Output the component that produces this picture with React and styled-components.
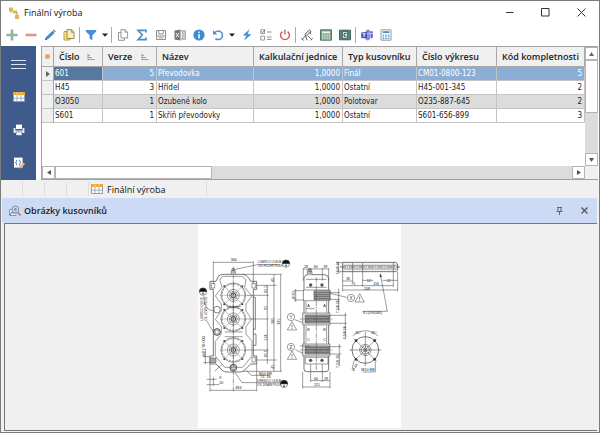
import React, { useState } from 'react'
import styled, { createGlobalStyle } from 'styled-components'

const columns = [
  { key: 'cislo', title: 'Číslo', width: 49, sort: true },
  { key: 'verze', title: 'Verze', width: 54, right: true, sort: true },
  { key: 'nazev', title: 'Název' },
  { key: 'jednice', title: 'Kalkulační jednice', width: 89, right: true },
  { key: 'typ', title: 'Typ kusovníku', width: 74 },
  { key: 'vykres', title: 'Číslo výkresu', width: 80 },
  { key: 'kod', title: 'Kód kompletnosti', width: 88, right: true },
]

const rows = [
  {
    cislo: '601',
    verze: '5',
    nazev: 'Převodovka',
    jednice: '1,0000',
    typ: 'Finál',
    vykres: 'CM01-0800-123',
    kod: '5',
  },
  {
    cislo: 'H45',
    verze: '3',
    nazev: 'Hřídel',
    jednice: '1,0000',
    typ: 'Ostatní',
    vykres: 'H45-001-345',
    kod: '2',
  },
  {
    cislo: 'O3050',
    verze: '1',
    nazev: 'Ozubené kolo',
    jednice: '1,0000',
    typ: 'Polotovar',
    vykres: 'O235-887-645',
    kod: '2',
  },
  {
    cislo: 'S601',
    verze: '1',
    nazev: 'Skříň převodovky',
    jednice: '1,0000',
    typ: 'Ostatní',
    vykres: 'S601-656-899',
    kod: '3',
  },
]

// toolbar icons, all on a 12 x 12 grid
const icons = {
  plus: <path d="M6 0.5V11.5M0.5 6H11.5" stroke="#8fb5a0" strokeWidth="2.6" />,
  minus: <path d="M0.5 6H11.5" stroke="#e0958a" strokeWidth="2.6" />,
  pencil: (
    <>
      <path d="M1 11L2 8L8.5 1.8L10.6 3.9L4 10.2Z" fill="#4a8ccb" />
      <path d="M9 1.3L9.8 0.6L11.7 2.5L11 3.3Z" fill="#35659c" />
      <path d="M1 11L1.6 9.2L2.9 10.4Z" fill="#444" />
    </>
  ),
  paste: (
    <>
      <path d="M1 2.5H7V11H1Z" fill="#ffe08a" stroke="#c99a33" />
      <path d="M4 0.6H8.5L11 3V9.5H4Z" fill="#ffeeb5" stroke="#8d7a4d" strokeWidth="0.9" />
      <path d="M8.3 0.6V3.2H11" fill="none" stroke="#8d7a4d" strokeWidth="0.8" />
    </>
  ),
  filter: <path d="M0.8 1H11.2V2.4L7.4 6.2V11.2L4.6 9.4V6.2L0.8 2.4Z" fill="#4490d8" />,
  copy: (
    <>
      <path d="M1.5 3.5H7.5V11.3H1.5Z" fill="#fff" stroke="#8a8a8a" strokeWidth="0.9" />
      <path d="M4 0.7H8L10.6 3.2V9H4Z" fill="#fff" stroke="#8a8a8a" strokeWidth="0.9" />
      <path d="M8 0.7V3.2H10.6" fill="none" stroke="#8a8a8a" strokeWidth="0.8" />
    </>
  ),
  sigma: (
    <path
      d="M10 3.4V1.4H2L6.3 6L2 10.6H10V8.6"
      fill="none"
      stroke="#4a8bc9"
      strokeWidth="1.6"
    />
  ),
  save: (
    <>
      <path d="M1.5 1.5H10.5V10.5H1.5Z" fill="#fff" stroke="#909090" />
      <path d="M3.8 1.5V5H8.2V1.5M1.5 7H10.5M3.5 8.8H8.5" fill="none" stroke="#909090" />
    </>
  ),
  excel: (
    <>
      <path d="M0.5 1.6L6.5 0.5V11.5L0.5 10.4Z" fill="#777" />
      <path d="M2 4L5 8.2M5 4L2 8.2" stroke="#fff" strokeWidth="0.9" />
      <path d="M7 1.8H11.4V10.2H7" fill="#eee" stroke="#999" strokeWidth="0.9" />
      <path d="M8.6 2V10M10 2V10" stroke="#999" strokeWidth="0.7" />
    </>
  ),
  info: (
    <>
      <circle cx="6" cy="6" r="5.6" fill="#3a8bd3" />
      <path d="M6 5V9.4M6 2.6V4" stroke="#fff" strokeWidth="1.5" />
    </>
  ),
  refresh: (
    <>
      <path
        d="M2.4 4.2A4.3 4.3 0 1 1 3.4 9.6"
        fill="none"
        stroke="#4a8ed0"
        strokeWidth="1.5"
      />
      <path d="M1 1.2V5.6H5.4Z" fill="#4a8ed0" />
    </>
  ),
  bolt: <path d="M8.6 0.3L1.8 6.2L5.2 6.8L3 11.8L10.2 5.4L6.8 4.8Z" fill="#4a94dc" />,
  list: (
    <>
      <path d="M0.8 0.8H4.6V4.6H0.8ZM0.8 7.2H4.6V11H0.8Z" fill="none" stroke="#8c8c8c" strokeWidth="0.9" />
      <path d="M1.4 2.4L2.6 3.7L5.2 0.6" fill="none" stroke="#666" strokeWidth="0.8" />
      <path d="M7 3H11.5M7 8H11.5M7 10.4H11.5" stroke="#8c8c8c" strokeWidth="1" />
    </>
  ),
  power: (
    <>
      <path
        d="M3.4 2.6A4.4 4.4 0 1 0 8.6 2.6"
        fill="none"
        stroke="#cf5a5d"
        strokeWidth="1.4"
      />
      <path d="M6 0.4V5.6" stroke="#cf5a5d" strokeWidth="1.4" />
    </>
  ),
  arm: (
    <>
      <path d="M3.6 5.4L8.4 0.8L10 2.4L5.4 7Z" fill="#ddd" stroke="#555" strokeWidth="0.8" />
      <path d="M9.6 2.6L9.2 5.4M4.6 6.4L1 11M4.6 6.4L6 11.4M7 7L11 10.8" fill="none" stroke="#555" strokeWidth="0.9" />
      <path d="M0.4 9.4L2.6 11.4M9.6 11.4L11.6 9.4" stroke="#555" strokeWidth="1" />
    </>
  ),
  calc: (
    <>
      <path d="M0.5 0.8H11.5V11.2H0.5Z" fill="#7fa38a" stroke="#4f7a5e" />
      <path d="M2 2.4H10V4.4H2Z" fill="#e9f2ea" />
      <path d="M2 6.2H10M2 8H10M2 9.8H10" stroke="#edf4ee" strokeWidth="1" strokeDasharray="1.4 0.8" />
    </>
  ),
  safe: (
    <>
      <path d="M0.5 1.2H11.5V10.8H0.5Z" fill="#5d8580" stroke="#3f6660" />
      <path d="M3.4 2.4H8.6V9.6H3.4Z" fill="#d6e4df" stroke="#2e4f4b" strokeWidth="0.8" />
      <path d="M7.4 4.4Q5 3.6 5 6T7.4 7.8" fill="none" stroke="#2e4f4b" strokeWidth="1" />
    </>
  ),
  teams: (
    <>
      <circle cx="7" cy="2.4" r="1.9" fill="#7b83d6" />
      <circle cx="10.4" cy="3.2" r="1.3" fill="#5a62c3" />
      <path d="M4 4.6H9.4V8.6Q9.2 11.2 6.6 11.4Q4.4 11.2 4 9Z" fill="#8790e0" />
      <path d="M9.6 5H11.9V8Q11.6 9.6 9.8 9.6Z" fill="#6068c6" />
      <path d="M0.2 3.4L6 2.8V9.6L0.2 9Z" fill="#5059b8" />
      <path d="M1.6 4.8H4.6M3.1 4.8V8" stroke="#fff" strokeWidth="0.9" />
    </>
  ),
  sheet: (
    <>
      <path d="M1 0.8H11V11.2H1Z" fill="#fdfdfd" stroke="#999" />
      <path d="M2.6 2.2H9.4V4H2.6Z" fill="#4c8bc8" />
      <path d="M2.6 6H9.4M2.6 7.8H9.4M2.6 9.6H9.4" stroke="#4c8bc8" strokeWidth="1" strokeDasharray="1.6 1" />
    </>
  ),
  caret: <path d="M3 4.4H9L6 7.8Z" fill="#222" />,
  menu: <path d="M0 2.5H15M0 6.5H15M0 10.5H15" stroke="#dde5f2" strokeWidth="1" />,
  table: (
    <>
      <path d="M0.5 1.5H11.5V10.5H0.5Z" fill="#fff" stroke="#8d9db5" />
      <path d="M0 1H12V4H0Z" fill="#f0a63c" />
      <path d="M4 4V10.5M8 4V10.5M0.5 7.2H11.5" stroke="#8d9db5" strokeWidth="0.8" />
      <path d="M4 1V4M8 1V4" stroke="#fbe2b8" strokeWidth="0.6" />
    </>
  ),
  printer: (
    <>
      <path d="M3 0.6H9V5H3Z" fill="#fff" />
      <path d="M0.6 4H2.4V6.4H9.6V4H11.4V9H0.6Z" fill="#e7ecf4" />
      <path d="M3 8H9V11.4H3Z" fill="#fff" stroke="#3f5b8b" strokeWidth="0.6" />
    </>
  ),
  script: (
    <>
      <path d="M1 0.6H9.6V10.6H1Z" fill="#fff" />
      <path d="M4.2 3Q3.2 3 3.4 4.6Q3.4 5.6 2.4 5.6Q3.4 5.6 3.4 6.6Q3.2 8.4 4.2 8.4M6 3Q7.2 3 7 4.6Q7 5.6 8 5.6Q7 5.6 7 6.6Q7.2 8.4 6 8.4" fill="none" stroke="#3d6fb5" strokeWidth="0.9" />
      <path d="M6 11.4L6.6 9.4L10.6 5.6L12 7L8 11Z" fill="#f0b352" />
    </>
  ),
}

const Icon = ({ name, box = 12 }) => (
  <svg width={box} height="12" viewBox={`0 0 ${box} 12`} aria-hidden="true">
    {icons[name]}
  </svg>
)

const toolbar = [
  [
    ['plus', 'Nový'],
    ['minus', 'Smazat'],
    ['pencil', 'Opravit'],
    ['paste', 'Kopie'],
  ],
  [
    ['filter', 'Filtr'],
    ['caret', 'Další filtry'],
  ],
  [
    ['copy', 'Kopírovat'],
    ['sigma', 'Součet'],
    ['save', 'Uložit'],
    ['excel', 'Export'],
    ['info', 'Informace'],
    ['refresh', 'Obnovit'],
    ['caret', 'Možnosti obnovení'],
    ['bolt', 'Akce'],
    ['list', 'Označit'],
    ['power', 'Ukončit'],
  ],
  [
    ['arm', 'Výroba'],
    ['calc', 'Kalkulace'],
    ['safe', 'Ceny'],
  ],
  [
    ['teams', 'Teams'],
    ['sheet', 'Kalkulačka'],
  ],
]

const sideItems = [
  ['menu', 'Nabídka'],
  ['table', 'Tabulka'],
  ['printer', 'Tisk'],
  ['script', 'Skripty'],
]

// one bearing seat of the gearbox: rings, cross lines and bolts
const Seat = ({ x, y }) => (
  <g transform={`translate(${x} ${y})`}>
    <circle r="37" />
    <circle r="34" strokeDasharray="7 3" />
    <circle r="18" />
    <circle r="12" />
    <circle r="7" strokeWidth="3" />
    <path d="M-40 0H40M0 -42V42M-29 -29L29 29M-29 29L29 -29" strokeWidth="1" />
    <g fill="#444" stroke="none">
      <circle cx="-27" cy="-27" r="3" />
      <circle cx="27" cy="-27" r="3" />
      <circle cx="-27" cy="27" r="3" />
      <circle cx="27" cy="27" r="3" />
    </g>
  </g>
)

const LevelMark = ({ x, y }) => (
  <g transform={`translate(${x} ${y})`}>
    <circle r="11" fill="#fff" />
    <path d="M-11 0A11 11 0 0 1 11 0Z" fill="#111" />
    <path d="M-3 8H3L0 2Z" fill="#111" stroke="none" />
  </g>
)

const Flag = ({ x, y, tx, ty, letter }) => (
  <>
    <circle cx={x} cy={y} r="11" />
    <text x={x} y={y + 5} fontSize="14" textAnchor="middle" fill="#333" stroke="none">
      {letter}
    </text>
    <path d={`M${tx} ${ty - 14}L${tx + 14} ${ty + 11}H${tx - 14}Z`} />
    <path d={`M${tx} ${ty - 5}V${ty + 3}M${tx} ${ty + 5}V${ty + 8}`} strokeWidth="2" />
  </>
)

const Shaft = ({ y }) => (
  <g transform={`translate(0 ${y})`}>
    <path d="M308 -18H390V18H308Z" fill="#e4e4e4" />
    <path d="M316 -12H388V12H316Z" fill="#aaa" />
    <path d="M316 -7H388M316 -2H388M316 3H388M316 8H388" stroke="#333" strokeWidth="1.6" />
    <path d="M300 0H398" strokeDasharray="10 3 3 3" />
  </g>
)

const Drawing = () => (
  <Sheet viewBox="0 0 203 204" role="img" aria-label="Výkres převodovky">
    <g
      transform="translate(2 30) scale(0.3333)"
      fill="none"
      stroke="#444"
      strokeWidth="1.6"
    >
      {/* front view */}
      <path d="M56 65Q60 62 74 61H128Q140 62 146 72L152 82H170V106H160V306H170V330H152L132 350Q128 354 120 354H82Q72 354 68 350L48 330H30V306H40V106H30V82H48Z" strokeWidth="2.2" />
      <path d="M62 72Q66 67 76 67H124Q132 68 138 78L134 100L156 126L138 150V170L154 196L138 218V240L156 262V306L128 340H74L46 306V262L64 240V218L46 196L64 170V150L46 126L66 100L60 78Z" />
      <path d="M94 61V50H106V61M96 50V44H104V50" fill="#ccc" />
      <path d="M160 130H166V226H160M160 240H168V274H160" strokeWidth="2" />
      <path d="M74 234H128M74 248H128M80 158H122" />
      <Seat x={100} y={124} />
      <Seat x={100} y={195} />
      <Seat x={100} y={288} />
      <path d="M100 38V415" strokeDasharray="14 3 4 3" />
      <circle cx="51" cy="167" r="10" strokeWidth="2" />
      <circle cx="51" cy="234" r="10" strokeWidth="3" />
      <circle cx="51" cy="234" r="6" />
      <circle cx="100" cy="341" r="10" strokeWidth="3" />
      <circle cx="100" cy="341" r="6" />
      <path d="M30 312H48V326H30Z" fill="#aaa" />
      <path d="M34 88H44V102H34ZM156 88H166V102H156ZM156 310H166V324H156Z" />

      {/* front view dimensions */}
      <path d="M40 25H160M40 22V90M160 22V90M30 409H170M30 330V412M170 330V412" />
      <path d="M128 61H246M170 94H230M140 124H206M140 195H206M140 288H206M170 318H230M128 352H246" />
      <path d="M202 94V330M222 61V352M242 61V352" />
      <path d="M20 376H50M20 392H58M40 370V396" />
      <path d="M106 46L172 32H240M12 125V135Q14 170 40 170M40 234L20 200M140 350L154 364H208M104 354L126 386H240M44 352L66 332" />
      <path d="M16 285V330M10 308H30M10 326H30" />
      <LevelMark x={258} y={29} />
      <LevelMark x={9} y={113} />
      <LevelMark x={252} y={390} />

      {/* side view */}
      <path d="M312 345V72Q314 62 324 62H374Q386 64 386 74V345Q386 353 378 353H320Q312 353 312 345Z" strokeWidth="2.2" />
      <path d="M318 76H380M318 100H380M318 142V176M380 142V176M318 216V268M380 216V268M316 310H384V330H316Z" />
      <path d="M322 62V52H336V62M324 52V45H334V52" fill="#ccc" />
      <path d="M310 108H390V140H310Z" fill="#fff" />
      <path d="M342 110H390V138H342Z" fill="#aaa" />
      <path d="M342 116H390M342 122H390M342 127H390M342 133H390" stroke="#333" strokeWidth="1.6" />
      <Shaft y={195} />
      <Shaft y={288} />
      <g fill="#555" stroke="none">
        <circle cx="332" cy="93" r="5" />
        <circle cx="366" cy="93" r="5" />
        <circle cx="332" cy="319" r="5" />
        <circle cx="366" cy="319" r="5" />
      </g>
      <path d="M349 70V350" strokeDasharray="14 3 4 3" />
      <path d="M310 45H386M310 42V80M330 42V60M367 42V80M386 42V80" />
      <path d="M282 110H310M282 138H310M287 105V144M390 116H420M390 136H420M416 104V170" />
      <path d="M390 184H440M390 208H440M436 176V256M390 278H424M390 300H424M418 270V336" />
      <path d="M308 353V404M390 353V404M308 399H390M332 330V384M367 330V384M332 380H390" />
      <path d="M284 197L308 206M286 287L308 298M300 276H330M318 164H344M390 118L440 130" />
      <Flag x={453} y={132} tx={479} ty={133} letter="X" />
      <Flag x={273} y={189} tx={276} ty={217} letter="Y" />
      <Flag x={273} y={279} tx={276} ty={305} letter="Z" />

      {/* input shaft */}
      <path d="M428 25H588L593 30V48L588 53H428Z" fill="#f2f2f2" strokeWidth="2.2" />
      <path d="M430 34H590M430 45H590M458 26V52M488 26V52M580 26V52" />
      <path d="M420 39H600" strokeWidth="2.4" strokeDasharray="18 3 4 3" />
      <path d="M428 53V112M593 53V112M458 53V84M488 53V98M580 53V98" />
      <path d="M428 81H458M488 79H520M548 79H593M428 95H580M428 108H593M415 26V56M410 26H428M410 53H428" />
      <path d="M541 60L562 172H488" />
      <path d="M541 60L545 68L540 69Z" fill="#333" />

      {/* flange detail */}
      <circle cx="496" cy="288" r="40" strokeWidth="2.2" />
      <circle cx="496" cy="288" r="17" />
      <circle cx="496" cy="288" r="12" strokeWidth="3" strokeDasharray="4 2" />
      <circle cx="496" cy="288" r="5" />
      <path d="M448 288H544M496 234V336M462 254L530 322M530 254L462 322" />
      <path d="M458 246A54 54 0 0 1 534 246M462 322L456 344M526 322V354H488" />
      <g fill="#333" stroke="none">
        <circle cx="468" cy="260" r="4" />
        <circle cx="524" cy="260" r="4" />
        <circle cx="468" cy="316" r="4" />
        <circle cx="524" cy="316" r="4" />
      </g>

      <g fill="#222" stroke="none" fontSize="11">
        <text x="92" y="22">360</text>
        <text x="174" y="28" fontSize="9">LUBRICO OLEJE</text>
        <text x="174" y="39" fontSize="9">OIL FILLER PLUG</text>
        <text x="172" y="384" fontSize="9">DRENICO OLEJE</text>
        <text x="172" y="395" fontSize="9">OIL DRAIN PLUG</text>
        <text x="176" y="362">M10 M8</text>
        <text x="180" y="373">TZ. 18</text>
        <text x="106" y="406">384</text>
        <text x="58" y="376">9</text>
        <text x="58" y="390">20</text>
        <text x="312" y="41">28</text>
        <text x="341" y="41">60</text>
        <text x="370" y="41">28</text>
        <text x="342" y="378">60</text>
        <text x="372" y="378">28</text>
        <text x="342" y="397">115</text>
        <text x="322" y="160">A</text>
        <text x="370" y="160">A</text>
        <text x="322" y="230">B</text>
        <text x="370" y="230">B</text>
        <text x="322" y="262">C</text>
        <text x="370" y="262">C</text>
        <text x="438" y="79">36</text>
        <text x="454" y="94">75</text>
        <text x="500" y="83">12</text>
        <text x="560" y="83">12</text>
        <text x="520" y="94">116</text>
        <text x="492" y="107">208</text>
        <text x="488" y="181" fontSize="9">N 1 (DIN5480)</text>
        <text x="466" y="240">45°</text>
        <text x="514" y="240">45°</text>
        <text x="484" y="350">M10 M8</text>
        <text transform="translate(200 116) rotate(-90)">82,5</text>
        <text transform="translate(200 168) rotate(-90)">91</text>
        <text transform="translate(200 260) rotate(-90)">124</text>
        <text transform="translate(200 310) rotate(-90)">82,5</text>
        <text transform="translate(221 84) rotate(-90)">45</text>
        <text transform="translate(221 210) rotate(-90)">305</text>
        <text transform="translate(221 344) rotate(-90)">45</text>
        <text transform="translate(241 212) rotate(-90)">395</text>
        <text transform="translate(10 200) rotate(-90)" fontSize="9">LUBRICO OLEJE</text>
        <text transform="translate(20 200) rotate(-90)" fontSize="9">OIL LEVEL PLUG</text>
        <text transform="translate(16 308) rotate(-90)" fontSize="9">4xØ 17/8H XX3</text>
        <text transform="translate(286 136) rotate(-90)">Ø 80</text>
        <text transform="translate(416 178) rotate(-90)">7,5/8 26</text>
        <text transform="translate(438 256) rotate(-90)">7,5/8 26</text>
        <text transform="translate(418 342) rotate(-90)">7,5/8 26</text>
        <text transform="translate(416 62) rotate(-90)">7,5/8 26</text>
        <text transform="translate(462 352) rotate(-60)">Ø 66</text>
      </g>
    </g>
  </Sheet>
)

function App() {
  const [selected, setSelected] = useState(0)

  return (
    <>
      <GlobalStyle />
      <Window>
        <TitleBar>
          <svg width="12" height="12" viewBox="0 0 12 12" aria-hidden="true">
            <path d="M1 0.5H5V4.5H1ZM5 3.5H9V6.5H5ZM7 8H11V12H7Z" fill="#dcb456" />
            <path d="M3 4.5V6M9 5V8" fill="none" stroke="#a8946a" />
          </svg>
          <Title>Finální výroba</Title>
          <CaptionButton aria-label="Minimalizovat">
            <svg width="9" height="9" viewBox="0 0 9 9">
              <path d="M1 4.5H8.5" stroke="#333" />
            </svg>
          </CaptionButton>
          <CaptionButton aria-label="Maximalizovat">
            <svg width="9" height="9" viewBox="0 0 9 9">
              <path d="M0.5 0.5H8V8H0.5Z" fill="none" stroke="#333" />
            </svg>
          </CaptionButton>
          <CaptionButton aria-label="Zavřít">
            <svg width="9" height="9" viewBox="0 0 9 9">
              <path d="M0.5 0.5L8.5 8.5M8.5 0.5L0.5 8.5" stroke="#333" />
            </svg>
          </CaptionButton>
        </TitleBar>

        <Toolbar>
          {toolbar.map((group) => (
            <ToolGroup key={group[0][0]}>
              {group.map(([name, label]) => (
                <ToolButton key={label} aria-label={label} $narrow={name === 'caret'}>
                  <Icon name={name} />
                </ToolButton>
              ))}
            </ToolGroup>
          ))}
        </Toolbar>

        <Main>
          <SideBar>
            {sideItems.map(([name, label]) => (
              <SideButton key={name} aria-label={label}>
                <Icon name={name} box={name === 'menu' ? 15 : 12} />
              </SideButton>
            ))}
          </SideBar>
          <GridBox>
            <TableArea>
              <Table>
                <colgroup>
                  <Col $width={12} />
                  {columns.map((c) => (
                    <Col key={c.key} $width={c.width} />
                  ))}
                </colgroup>
                <thead>
                  <tr>
                    <Th>
                      <Dot />
                    </Th>
                    {columns.map((c) => (
                      <Th key={c.key}>
                        <HeadCell>
                          {c.title}
                          {c.sort && (
                            <svg width="8" height="8" viewBox="0 0 8 8" aria-hidden="true">
                              <path d="M1 0.5V7.5M1 2.5H3M1 4.5H5M1 6.5H7.5" stroke="#a0a0a0" />
                            </svg>
                          )}
                        </HeadCell>
                      </Th>
                    ))}
                  </tr>
                </thead>
                <tbody>
                  {rows.map((row, idx) => (
                    <Row
                      key={row.cislo}
                      $selected={idx === selected}
                      $alt={idx === 2}
                      onClick={() => setSelected(idx)}
                    >
                      <Indicator>
                        {idx === selected && (
                          <svg width="4" height="6" viewBox="0 0 4 6" aria-hidden="true">
                            <path d="M0 0L4 3L0 6Z" fill="#666" />
                          </svg>
                        )}
                      </Indicator>
                      {columns.map((c) => (
                        <Td
                          key={c.key}
                          $right={c.right}
                          $focused={idx === selected && c.key === 'cislo'}
                        >
                          {row[c.key]}
                        </Td>
                      ))}
                    </Row>
                  ))}
                </tbody>
              </Table>
            </TableArea>
            <VScroll>
              <ScrollButton aria-label="Nahoru">
                <svg width="5" height="4" viewBox="0 0 5 4">
                  <path d="M0 4H5L2.5 0Z" fill="#666" />
                </svg>
              </ScrollButton>
              <VThumb />
              <Track />
              <ScrollButton aria-label="Dolů">
                <svg width="5" height="4" viewBox="0 0 5 4">
                  <path d="M0 0H5L2.5 4Z" fill="#555" />
                </svg>
              </ScrollButton>
            </VScroll>
            <HScroll>
              <ScrollButton aria-label="Vlevo">
                <svg width="4" height="5" viewBox="0 0 4 5">
                  <path d="M4 0V5L0 2.5Z" fill="#555" />
                </svg>
              </ScrollButton>
              <HThumb />
              <Track />
              <ScrollButton aria-label="Vpravo">
                <svg width="4" height="5" viewBox="0 0 4 5">
                  <path d="M0 0V5L4 2.5Z" fill="#555" />
                </svg>
              </ScrollButton>
            </HScroll>
            <Corner />
          </GridBox>
        </Main>

        <StatusBar>
          <StatusCell />
          <StatusCell />
          <StatusCell />
          <StatusCell />
          <StatusTab>
            <Icon name="table" />
            Finální výroba
          </StatusTab>
        </StatusBar>

        <Panel>
          <PanelHeader>
            <svg width="12" height="12" viewBox="0 0 12 12" aria-hidden="true">
              <path d="M0.5 4.5H7V10.5H0.5Z" fill="#e8ecf4" stroke="#8793a8" />
              <path d="M1 10L3 7L4.6 8.6L6 7.4" fill="none" stroke="#5c7fae" />
              <circle cx="6.4" cy="4.4" r="3.4" fill="#c9d9ef" stroke="#7f8da6" />
              <circle cx="6.4" cy="4.4" r="1.3" fill="#7f8da6" />
              <path d="M9 7.4L11.5 10.5" stroke="#c0605a" strokeWidth="1.5" />
            </svg>
            <PanelTitle>Obrázky kusovníků</PanelTitle>
            <PanelButton aria-label="Připnout">
              <svg width="7" height="8" viewBox="0 0 7 8">
                <path d="M1 0.5H6M2 0.5V4M5 0.5V4M0.5 4.5H6.5M3.5 4.5V8" fill="none" stroke="#666" />
              </svg>
            </PanelButton>
            <PanelButton aria-label="Zavřít panel">
              <svg width="7" height="7" viewBox="0 0 7 7">
                <path d="M0.5 0.5L6.5 6.5M6.5 0.5L0.5 6.5" stroke="#555" strokeWidth="1.3" />
              </svg>
            </PanelButton>
          </PanelHeader>
          <Viewer>
            <Drawing />
          </Viewer>
        </Panel>
      </Window>
    </>
  )
}

const GlobalStyle = createGlobalStyle`
  * {
    box-sizing: border-box;
  }
  body {
    margin: 0;
    font-family: 'Open Sans', sans-serif;
    font-size: 9px;
    color: #222;
  }
  button {
    padding: 0;
    border: none;
    background: none;
  }
  svg {
    display: block;
    flex: none;
  }
`

const Window = styled.div`
  display: flex;
  flex-direction: column;
  min-height: 100vh;
  border: 1px solid #7b7b7b;
  background: #fff;
`

const TitleBar = styled.header`
  display: flex;
  align-items: center;
  height: 23px;
  padding-left: 7px;
`

const Title = styled.h1`
  flex: 1;
  margin: 0 0 0 4px;
  font-size: 9px;
  font-weight: 400;
  color: #111;
`

const CaptionButton = styled.button`
  display: flex;
  align-items: center;
  justify-content: center;
  width: 36px;
  height: 23px;
`

const Toolbar = styled.div`
  display: flex;
  align-items: center;
  height: 22px;
  padding-left: 1px;
`

const ToolGroup = styled.div`
  display: flex;

  & + & {
    margin-left: 1px;
    padding-left: 1px;
    border-left: 1px solid #aaa;
  }
`

const ToolButton = styled.button`
  display: flex;
  align-items: center;
  justify-content: center;
  width: ${(props) => (props.$narrow ? '10px' : '19px')};
  height: 16px;
`

const Main = styled.main`
  display: flex;
  gap: 5px;
  padding-right: 1px;
`

const SideBar = styled.nav`
  display: flex;
  flex-direction: column;
  width: 35px;
  padding: 1px 0;
  background: #3f5b8b;
`

const SideButton = styled.button`
  display: flex;
  align-items: center;
  justify-content: center;
  height: 33px;
`

const GridBox = styled.div`
  flex: 1;
  min-width: 0;
  display: grid;
  grid-template-columns: 1fr 13px;
  grid-template-rows: 1fr 13px;
  border: 1px solid #a0a0a0;
  border-right: none;
`

const TableArea = styled.div`
  min-width: 0;
  overflow: hidden;
`

const Table = styled.table`
  width: 100%;
  table-layout: fixed;
  border-collapse: separate;
  border-spacing: 0;
`

const Col = styled.col`
  width: ${(props) => (props.$width ? `${props.$width}px` : 'auto')};
`

const Th = styled.th`
  height: 20px;
  padding: 0;
  border-right: 1px solid #a8a8a8;
  border-bottom: 1px solid #a8a8a8;
  background: #f0f0f0;
  text-align: left;
`

const HeadCell = styled.div`
  display: flex;
  align-items: center;
  justify-content: space-between;
  padding: 0 7px 0 5px;
  line-height: 14px;
  font-weight: 600;
  white-space: nowrap;
`

const Dot = styled.div`
  width: 5px;
  height: 5px;
  margin: 0 auto;
  border-radius: 50%;
  background: #e3a857;
`

const Row = styled.tr`
  color: ${(props) => (props.$selected ? '#fff' : '#222')};
  background: ${(props) => {
    if (props.$selected) return '#8aaed6'
    return props.$alt ? '#dcdcdc' : '#fff'
  }};
`

const Td = styled.td`
  height: 14px;
  padding: 0 2px 0 1px;
  border-right: 1px solid #c4c4c4;
  border-bottom: 1px solid #c4c4c4;
  background: ${(props) => (props.$focused ? '#5679a0' : 'transparent')};
  font-family: 'DejaVu Sans Condensed', 'DejaVu Sans', sans-serif;
  font-size: 8px;
  line-height: 13px;
  text-align: ${(props) => (props.$right ? 'right' : 'left')};
  white-space: nowrap;
`

const Indicator = styled.td`
  padding: 0 0 0 4px;
  border-right: 1px solid #a8a8a8;
  border-bottom: 1px solid #c4c4c4;
  background: #f0f0f0;
`

const VScroll = styled.div`
  display: flex;
  flex-direction: column;
  background: #dcdcdc;
`

const HScroll = styled.div`
  display: flex;
  background: #dcdcdc;
`

const ScrollButton = styled.button`
  display: flex;
  align-items: center;
  justify-content: center;
  flex: none;
  width: 13px;
  height: 13px;
  border: 1px solid #b4b4b4;
  background: #fff;
`

const VThumb = styled.div`
  height: 53px;
  border: 1px solid #b4b4b4;
  background: #fff;
`

const HThumb = styled.div`
  width: 29%;
  border: 1px solid #b4b4b4;
  background: #fff;
`

const Track = styled.div`
  flex: 1;
`

const Corner = styled.div`
  background: #f0f0f0;
`

const StatusBar = styled.div`
  display: flex;
  align-items: center;
  height: 18px;
  background: #f0f0f0;
`

const StatusCell = styled.div`
  width: 22px;
  height: 14px;
  border-right: 1px solid #ddd;
`

const StatusTab = styled.div`
  display: flex;
  align-items: center;
  gap: 4px;
  width: 118px;
  height: 14px;
  padding-left: 2px;
  border-right: 1px solid #ddd;
  color: #111;
`

const Panel = styled.section`
  flex: 1;
  display: flex;
  flex-direction: column;
  padding: 0 2px 0 1px;
  background: #f0f0f0;
`

const PanelHeader = styled.div`
  display: flex;
  align-items: center;
  height: 25px;
  padding-left: 7px;
  background: #cddaf6;
`

const PanelTitle = styled.h2`
  flex: 1;
  margin: 0 0 0 3px;
  font-size: 9px;
  font-weight: 600;
`

const PanelButton = styled.button`
  display: flex;
  align-items: center;
  justify-content: center;
  width: 25px;
  height: 20px;
`

const Viewer = styled.div`
  flex: 1;
  display: flex;
  justify-content: center;
  margin: 0 0 1px 2px;
  padding-right: 4px;
  border: 1px solid #777;
  border-right: none;
  background: #f0f0f0;
`

const Sheet = styled.svg`
  width: 203px;
  height: 204px;
  background: #fff;
  font-family: 'Liberation Sans', sans-serif;
`

export default App
